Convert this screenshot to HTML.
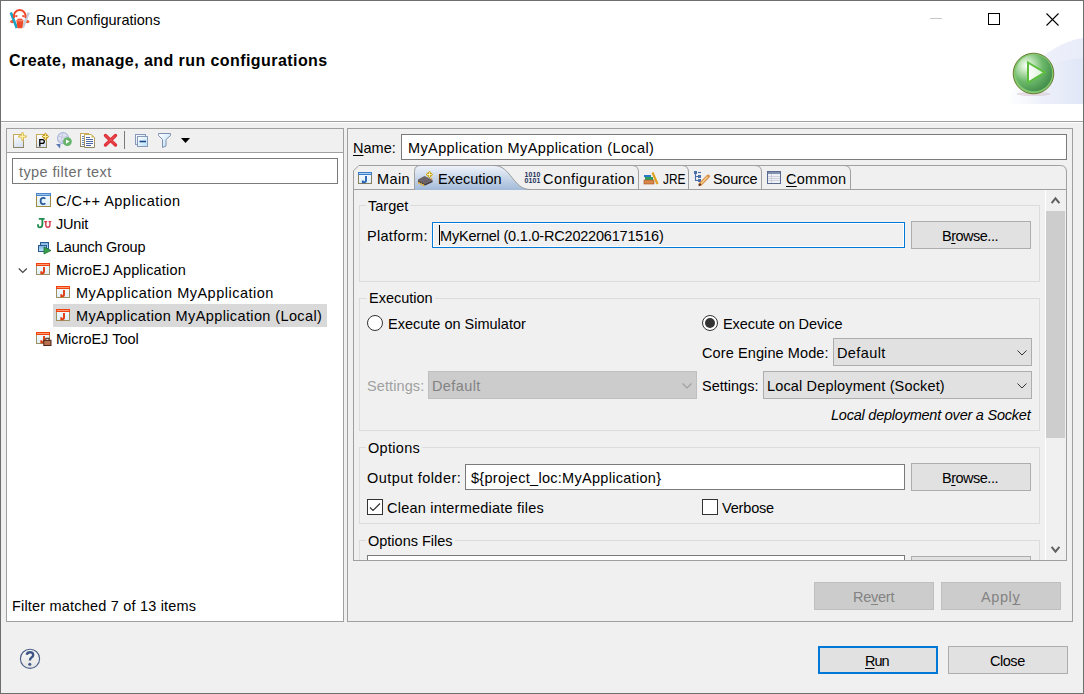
<!DOCTYPE html>
<html><head><meta charset="utf-8">
<style>
html,body{margin:0;padding:0;}
body{width:1084px;height:694px;position:relative;overflow:hidden;background:#f0f0f0;font-family:"Liberation Sans",sans-serif;font-size:14.5px;line-height:17px;color:#000;}
.a{position:absolute;}
.t{position:absolute;white-space:nowrap;font-size:14.5px;line-height:17px;}
.u{text-decoration:underline;text-underline-offset:2px;text-decoration-skip-ink:none;}
.box{position:absolute;box-sizing:border-box;}
svg{position:absolute;overflow:visible;}
</style></head><body>
<!-- window frame -->
<div class="box" style="left:0;top:0;width:1084px;height:694px;border:1px solid #6e6e6e;"></div>
<!-- white title + header -->
<div class="a" style="left:1px;top:1px;width:1082px;height:120px;background:#fff;"></div>
<div class="a" style="left:1px;top:121px;width:1082px;height:1px;background:#a0a0a0;"></div>
<div class="a" style="left:1px;top:122px;width:1082px;height:1px;background:#fff;"></div>

<!-- title -->
<div class="t" style="left:36px;top:12px;">Run Configurations</div>
<!-- window controls -->
<div class="a" style="left:930px;top:18px;width:12px;height:1px;background:#c6c6c6;"></div>
<div class="box" style="left:988px;top:13px;width:12px;height:12px;border:1px solid #000;"></div>
<svg style="left:1046px;top:13px" width="13" height="13" viewBox="0 0 13 13"><path d="M0.5 0.5L12.5 12.5M12.5 0.5L0.5 12.5" stroke="#000" stroke-width="1.1"/></svg>

<!-- header -->
<div class="t" style="left:9px;top:52px;font-weight:bold;font-size:16px;letter-spacing:0.43px;">Create, manage, and run configurations</div>


<!-- header decor + play -->
<svg style="left:1000px;top:36px" width="84" height="70" viewBox="1000 36 84 70">
<defs>
<linearGradient id="dg1" x1="0" y1="0" x2="1" y2="0"><stop offset="0" stop-color="#fff"/><stop offset="0.5" stop-color="#eef1fb"/><stop offset="1" stop-color="#e8ecf9"/></linearGradient>
<linearGradient id="dg2" x1="0" y1="0" x2="1" y2="0"><stop offset="0" stop-color="#eef1fb"/><stop offset="1" stop-color="#dfe5f6"/></linearGradient>
<radialGradient id="pg" cx="0.3" cy="0.3" r="0.8"><stop offset="0" stop-color="#ffffff"/><stop offset="0.2" stop-color="#c8e8c0"/><stop offset="0.55" stop-color="#6cb86a"/><stop offset="1" stop-color="#3e8a48"/></radialGradient>
<linearGradient id="tg" x1="0" y1="0" x2="1" y2="0"><stop offset="0" stop-color="#ffffff"/><stop offset="1" stop-color="#d6efd3"/></linearGradient>
</defs>
<path d="M1083 38 C1055 42 1025 65 1005 104 L1083 104 Z" fill="url(#dg1)"/>
<path d="M1083 58 C1060 60 1045 66 1038 72 L1040 104 L1083 104 Z" fill="url(#dg2)" opacity="0.8"/>
<ellipse cx="1033.5" cy="94" rx="17" ry="2" fill="#d8c8d0" opacity="0.6"/>
<circle cx="1033.5" cy="73.5" r="20.3" fill="#80c870" stroke="#6d7a30" stroke-width="1"/>
<circle cx="1033.9" cy="73" r="18.3" fill="url(#pg)"/>
<path d="M1028 62.5 L1044.5 72.5 L1028 82.5 Z" fill="url(#tg)" stroke="#5cbf3c" stroke-width="2" stroke-linejoin="miter"/>
</svg>

<!-- title icon -->
<svg style="left:9px;top:8px" width="22" height="22" viewBox="9 8 22 22">
<ellipse cx="12.3" cy="21.6" rx="2.3" ry="1.7" fill="#ef5a3a"/><ellipse cx="27.3" cy="21.6" rx="2.3" ry="1.7" fill="#ef5a3a"/>
<path d="M10.8 12.5 L16.8 28" stroke="#1ba4c4" stroke-width="2.6"/>
<path d="M28.8 12.5 L22.8 27.5" stroke="#c5ced8" stroke-width="2.6"/>
<path d="M14.16 18 A5.9 5.9 0 1 1 25.24 18" fill="#fff" stroke="#ef4a2a" stroke-width="1.9"/>

<circle cx="16.3" cy="16.1" r="1.2" fill="#ef5a3a"/><circle cx="23.3" cy="16.1" r="1.2" fill="#ef5a3a"/>
<path d="M16.3 20 L23.5 20 L22.3 28.3 L17.5 28.3 Z" fill="#ef4a2a"/>
<ellipse cx="19.9" cy="19.4" rx="2.9" ry="1" fill="#ef5a3a"/>
<path d="M17 20.8 H22.8" stroke="#ffb09a" stroke-width="0.8"/>
</svg>

<!-- left toolbar icons -->
<svg style="left:10px;top:130px;z-index:5" width="185" height="20" viewBox="10 130 185 20">
<defs>
<linearGradient id="docg" x1="0" y1="0" x2="0.3" y2="1"><stop offset="0" stop-color="#ffffff"/><stop offset="1" stop-color="#d8e2f2"/></linearGradient>
<linearGradient id="tanb" x1="0" y1="0" x2="0" y2="1"><stop offset="0" stop-color="#c8aa5a"/><stop offset="1" stop-color="#8c8464"/></linearGradient>
<linearGradient id="lblue" x1="0" y1="0" x2="1" y2="1"><stop offset="0" stop-color="#ffffff"/><stop offset="1" stop-color="#b6e0f8"/></linearGradient>
</defs>
<rect x="13.5" y="134.5" width="10" height="13" fill="url(#docg)" stroke="url(#tanb)"/>
<path d="M22.5 133.2 V139.8 M19.2 136.5 H25.8" stroke="#e0c060" stroke-width="2.4" stroke-linecap="round"/>
<path d="M22.5 133.8 V139.2 M19.8 136.5 H25.2" stroke="#fff4a0" stroke-width="1"/>
<rect x="36.5" y="134.5" width="10" height="13" fill="url(#docg)" stroke="url(#tanb)"/>
<path d="M39.8 146.5 V139.6 H42.3 Q44.3 139.6 44.3 141.5 Q44.3 143.4 42.3 143.4 H39.8" fill="none" stroke="#000" stroke-width="1.3"/>
<path d="M45.4 132.5 L49 136.5 L45.4 140.5 L41.8 136.5 Z" fill="#c89a20"/>
<path d="M45.4 133.8 V139.2 M43 136.5 H47.8" stroke="#fff4a0" stroke-width="1"/>
<circle cx="63" cy="138.2" r="5.5" fill="#e4e2f0" stroke="#a8b8d8" stroke-width="1.2"/><path d="M58 136 Q63 139 68 136 M58 140.5 Q63 143 68 140.5 M63 132.8 Q60 138 63 143.6" stroke="#b8c0dc" stroke-width="0.8" fill="none"/>
<path d="M56 144 L60.5 144 L60 148.5 Z" fill="#5a78b0"/>
<circle cx="67.4" cy="141.6" r="4.4" fill="#66b46a"/>
<path d="M66 139.4 L69.6 141.6 L66 143.8 Z" fill="#fff"/>
<rect x="80.5" y="133.5" width="8" height="13" fill="#fff" stroke="url(#tanb)"/>
<path d="M82 136.5 H85 M82 138.5 H85 M82 140.5 H85 M82 142.5 H85 M82 144.5 H85" stroke="#5a78b0" stroke-width="0.9"/>
<path d="M84.5 134.5 H91.5 L94.5 137.5 V147.5 H84.5 Z" fill="#fff" stroke="url(#tanb)"/>
<path d="M91.5 134.5 V137.5 H94.5" fill="#d8b860"/>
<path d="M86 137.5 H90 M86 139.5 H93 M86 141.5 H93 M86 143.5 H93 M86 145.5 H91" stroke="#4a68a8" stroke-width="1"/>
<path d="M105.5 135.5 L115.5 145 M115.5 135.5 L105.5 145" stroke="#e0303a" stroke-width="3.4" stroke-linecap="round"/>
<path d="M106 135.6 L115.2 144.4 M115.2 135.6 L106 144.4" stroke="#f07070" stroke-width="1" opacity="0.6"/>
<rect x="124" y="131" width="1" height="18" fill="#7a7a7a"/>
<rect x="135.5" y="134.5" width="10" height="10" fill="url(#lblue)" stroke="#8a98b8"/>
<rect x="137.5" y="136.5" width="10" height="10" fill="url(#lblue)" stroke="#8a98b8"/>
<path d="M139.5 141.5 H146" stroke="#1a4a8a" stroke-width="1.6"/>
<path d="M158.5 133.5 H170.5 V135.5 L166 139.5 V146 L162.5 147.5 V139.5 L158.5 135.5 Z" fill="url(#lblue)" stroke="#8090b0"/>
<path d="M181 138 H190 L185.5 143 Z" fill="#000"/>
</svg>

<!-- tree icons -->
<svg style="left:16px;top:190px;z-index:5" width="60" height="160" viewBox="16 190 60 160">
<defs>
<linearGradient id="wf" x1="0" y1="0" x2="0" y2="1"><stop offset="0" stop-color="#f4fbff"/><stop offset="1" stop-color="#dff0fa"/></linearGradient>
<linearGradient id="lb" x1="0" y1="0" x2="0" y2="1"><stop offset="0" stop-color="#7ab0e0"/><stop offset="1" stop-color="#c4e6fa"/></linearGradient>
</defs>
<!-- C/C++ -->
<rect x="36.5" y="193.5" width="14" height="13" fill="url(#wf)" stroke="#a08a40"/>
<rect x="36" y="193" width="15" height="3" fill="#4a86c8"/>
<rect x="37" y="194" width="13" height="1" fill="#9ac4ec"/>
<path d="M45.3 198.8 Q44.6 197.9 43.2 197.9 Q40.6 197.9 40.6 201 Q40.6 204.1 43.2 204.1 Q44.6 204.1 45.3 203.2" fill="none" stroke="#2a5a9a" stroke-width="1.7"/>
<!-- JUnit -->
<path d="M38.8 218.8 H44.6 M42.4 218.8 V224.5 Q42.4 227.3 39.8 227.3 Q38 227.3 38 225.2 V224.2" fill="none" stroke="#1e8a4a" stroke-width="1.8"/>
<path d="M44.2 221.6 H47.2 M48.6 221.6 H51.2 M45.8 221.6 V225 Q45.8 227.3 47.8 227.3 Q49.9 227.3 49.9 225 V221.6" fill="none" stroke="#d83a4a" stroke-width="1.4"/>
<!-- Launch group -->
<rect x="40.5" y="242.5" width="8" height="6" fill="url(#lb)" stroke="#2a5a90"/>
<rect x="38.5" y="245.5" width="8" height="6" fill="url(#lb)" stroke="#2a5a90"/>
<path d="M44 247 L51 250.5 L44 254 Z" fill="#3aa04a" stroke="#1a7030" stroke-width="0.8"/>
<!-- MicroEJ app -->
<g id="mej">
<rect x="36.5" y="263.5" width="13" height="11" fill="url(#wf)" stroke="#a09060"/>
<rect x="36" y="263" width="14" height="3" fill="#f0400e"/>
<rect x="37" y="264" width="12" height="1" fill="#ff9a70"/>
<path d="M44 267 V272 Q44 273.2 42.8 273.2 H41.3 V271.3" stroke="#e03a10" stroke-width="1.9" fill="none"/>
</g>
<use href="#mej" x="20" y="23"/>
<use href="#mej" x="20" y="46"/>
<!-- MicroEJ tool -->
<rect x="36.5" y="332.5" width="13" height="11" fill="url(#wf)" stroke="#a09060"/>
<rect x="36" y="332" width="14" height="3" fill="#f0400e"/>
<rect x="37" y="333" width="12" height="1" fill="#ff9a70"/>
<path d="M44 336 V341 Q44 342.2 42.8 342.2 H41.3 V340.3" stroke="#e03a10" stroke-width="1.9" fill="none"/>
<rect x="43.8" y="340.3" width="7.2" height="5.2" fill="#b8704e" stroke="#4a2418" stroke-width="1"/>
<rect x="45.8" y="338.3" width="3.2" height="2" fill="#fff" stroke="#4a2418" stroke-width="1"/>
</svg>

<!-- LEFT PANEL -->
<div class="box" style="left:6px;top:128px;width:338px;height:494px;border:1px solid #a0a0a0;background:#fff;"></div>
<div class="a" style="left:7px;top:129px;width:336px;height:23px;background:#f0f0f0;"></div>
<div class="a" style="left:7px;top:152px;width:336px;height:1px;background:#a0a0a0;"></div>
<div class="box" style="left:12px;top:158px;width:326px;height:26px;border:1px solid #7a7a7a;background:#fff;"></div>
<div class="t" style="left:19px;top:164px;color:#6d6d6d;letter-spacing:0.4px;">type filter text</div>

<!-- tree -->
<div class="a" style="left:53px;top:304px;width:274px;height:23px;background:#d9d9d9;"></div>
<div class="t" style="left:56px;top:193px;letter-spacing:0.5px;">C/C++ Application</div>
<div class="t" style="left:56px;top:216px;letter-spacing:-0.18px;">JUnit</div>
<div class="t" style="left:56px;top:239px;letter-spacing:-0.22px;">Launch Group</div>
<div class="t" style="left:56px;top:262px;letter-spacing:0.18px;">MicroEJ Application</div>
<div class="t" style="left:76px;top:285px;letter-spacing:0.49px;">MyApplication MyApplication</div>
<div class="t" style="left:76px;top:308px;letter-spacing:0.38px;">MyApplication MyApplication (Local)</div>
<div class="t" style="left:56px;top:331px;">MicroEJ Tool</div>
<svg style="left:18px;top:268px" width="10" height="6" viewBox="0 0 10 6"><path d="M0.8 0.5L4.8 4.5L8.8 0.5" stroke="#404040" stroke-width="1.1" fill="none"/></svg>

<div class="t" style="left:12px;top:598px;letter-spacing:0.19px;">Filter matched 7 of 13 items</div>

<!-- RIGHT PANEL -->
<div class="box" style="left:347px;top:128px;width:726px;height:494px;border:1px solid #a0a0a0;"></div>
<div class="t" style="left:353px;top:140px;"><span class="u">N</span>ame:</div>
<div class="box" style="left:401px;top:134px;width:666px;height:26px;border:1px solid #7a7a7a;background:#fff;"></div>
<div class="t" style="left:408px;top:140px;letter-spacing:0.38px;">MyApplication MyApplication (Local)</div>

<!-- tab folder -->
<div class="box" style="left:353px;top:171px;width:714px;height:390px;border:1px solid #a0a0a0;border-top:none;"></div>
<svg style="left:353px;top:164px" width="714" height="27" viewBox="353 164 714 27">
<defs><linearGradient id="selg" x1="0" y1="0" x2="0" y2="1"><stop offset="0" stop-color="#eef2f9"/><stop offset="1" stop-color="#a2bad8"/></linearGradient></defs>
<path d="M415 190 V171.5 Q415 166 420.5 166 H495 C511 166 513 189.5 530 189.5 V190 Z" fill="url(#selg)"/>
<path d="M353.5 172 V170.8 L358.8 165.5 H1060.5 Q1066.5 165.5 1066.5 172" fill="none" stroke="#a0a0a0"/>
<path d="M353.5 189.5 H415 M529 189.5 H1066.5" stroke="#a0a0a0"/>
<path d="M414.5 190 V171.5 Q414.5 165.5 420.5 165.5" fill="none" stroke="#a0a0a0"/>
<path d="M494 165.5 C511 165.5 513 189.5 530 189.5" fill="none" stroke="#9a9a9a"/>
<path d="M632 165.5 Q638.5 165.5 638.5 172 V189.5" fill="none" stroke="#a0a0a0"/>
<path d="M682 165.5 Q688.5 165.5 688.5 172 V189.5" fill="none" stroke="#a0a0a0"/>
<path d="M755 165.5 Q761.5 165.5 761.5 172 V189.5" fill="none" stroke="#a0a0a0"/>
<path d="M844 165.5 Q850.5 165.5 850.5 172 V189.5" fill="none" stroke="#a0a0a0"/>
<!-- tab icons -->
<defs>
<linearGradient id="wf2" x1="0" y1="0" x2="0" y2="1"><stop offset="0" stop-color="#f4fbff"/><stop offset="1" stop-color="#dff0fa"/></linearGradient>
</defs>
<rect x="358.5" y="172.5" width="13" height="11" fill="url(#wf2)" stroke="#8a7e60"/>
<rect x="358" y="172" width="14" height="3" fill="#3a7cc8"/>
<rect x="359" y="173" width="12" height="1" fill="#a8d0f0"/>
<path d="M366 176 V180.8 Q366 182.2 364.6 182.2 H362.8 V180.6" stroke="#2a64b0" stroke-width="1.9" fill="none"/>
<!-- chip -->
<path d="M418 179.5 L424.5 176 L432.5 179.8 L432.5 181.5 L425 184.8 L418 181.5 Z" fill="#6c6468"/>
<path d="M418 181.5 L425 184.8 L432.5 181.5" fill="none" stroke="#3a3436" stroke-width="1.2"/>
<path d="M419.3 182 L418.6 184 M421.5 183 L420.8 185 M423.7 184 L423 186" stroke="#f0b020" stroke-width="1.3"/>
<path d="M429.4 171 L433 174.6 L429.4 178.2 L425.8 174.6 Z" fill="#c8a010"/>
<path d="M429.4 172.2 V177 M427 174.6 H431.8" stroke="#fff6c0" stroke-width="1"/>
<circle cx="431.5" cy="178.6" r="0.8" fill="#f0b020"/>
<!-- 1010 0101 -->
<text x="524.6" y="176.9" font-family="Liberation Sans" font-weight="bold" font-size="7" fill="#1a2f5a" letter-spacing="0.1">1010</text>
<text x="524.6" y="183.1" font-family="Liberation Sans" font-weight="bold" font-size="7" fill="#1a2f5a" letter-spacing="0.1">0101</text>
<!-- books -->
<rect x="644" y="175" width="7" height="2.2" fill="#2a78c0"/>
<rect x="645" y="177" width="8" height="3.2" fill="#2aa060"/>
<rect x="644" y="180" width="10" height="4" fill="#d8864a" stroke="#a85020" stroke-width="0.6"/>
<path d="M652.5 172.5 L657.5 184" stroke="#e0a020" stroke-width="2.2"/>
<!-- source -->
<rect x="694" y="171" width="3" height="3" fill="#4a6ea8"/>
<path d="M698 172.5 H701" stroke="#4a6ea8" stroke-width="1.1"/>
<path d="M695.5 174 V180.5 H698 M695.5 176.5 H698" stroke="#4a6ea8" stroke-width="1.1" fill="none"/>
<rect x="698" y="175" width="3" height="3" fill="#4a6ea8"/>
<rect x="698" y="179" width="3" height="3" fill="#4a6ea8"/>
<path d="M700.3 184.2 L708.2 176.3" stroke="#d8904a" stroke-width="3.6" stroke-linecap="round"/>
<path d="M701 183.4 L707.6 176.8" stroke="#f8d090" stroke-width="1.4"/>
<path d="M698.8 185.6 L700.6 183.8" stroke="#5a3020" stroke-width="1.8"/>
<!-- common table -->
<rect x="767.5" y="171.5" width="13" height="12" fill="#eef0f6" stroke="#5a6a90"/>
<rect x="768" y="172" width="12" height="2" fill="#8090b0"/>
<path d="M771.5 174 V183 M768 176.5 H780 M768 178.5 H780 M768 180.5 H780" stroke="#c4cad8" stroke-width="0.8"/>
</svg>

<!-- tabs texts -->
<div class="t" style="left:377px;top:171px;letter-spacing:0.4px;">Main</div>
<div class="t" style="left:438px;top:171px;">Execution</div>
<div class="t" style="left:543px;top:171px;letter-spacing:0.45px;">Configuration</div>
<div class="t" style="left:663px;top:171px;transform:scaleX(0.82);transform-origin:0 0;">JRE</div>
<div class="t" style="left:713px;top:171px;letter-spacing:-0.3px;">Source</div>
<div class="t" style="left:786px;top:171px;letter-spacing:0.25px;"><span class="u">C</span>ommon</div>

<!-- scrollbar -->
<div class="a" style="left:1045px;top:190px;width:1px;height:370px;background:#fff;"></div>
<div class="a" style="left:1046px;top:211px;width:19px;height:227px;background:#cdcdcd;"></div>
<svg style="left:1051px;top:197px" width="10" height="8" viewBox="0 0 10 8"><path d="M0.6 6.2L4.5 1.3L8.4 6.2" stroke="#606060" stroke-width="2" fill="none"/></svg>
<svg style="left:1051px;top:546px" width="10" height="8" viewBox="0 0 10 8"><path d="M0.6 0.8L4.5 5.7L8.4 0.8" stroke="#606060" stroke-width="2" fill="none"/></svg>

<!-- Target group -->
<div class="box" style="left:359px;top:205px;width:681px;height:77px;border:1px solid #dcdcdc;"></div>
<div class="a t" style="left:366px;top:198px;padding:0 2px;background:#f0f0f0;">Target</div>
<div class="t" style="left:367px;top:228px;letter-spacing:0.3px;">Platform:</div>
<div class="box" style="left:432px;top:222px;width:473px;height:26px;border:1px solid #0078d7;background:#f0f0f0;box-shadow:inset 0 0 0 1px #fff;"></div>
<div class="a" style="left:439px;top:225px;width:1px;height:20px;background:#000;"></div>
<div class="t" style="left:440px;top:228px;letter-spacing:-0.2px;">MyKernel (0.1.0-RC202206171516)</div>
<div class="box" style="left:911px;top:221px;width:120px;height:28px;border:1px solid #adadad;background:#e1e1e1;"></div>
<div class="t" style="left:942px;top:228px;letter-spacing:-0.5px;">B<span class="u">r</span>owse...</div>

<!-- Execution group -->
<div class="box" style="left:359px;top:298px;width:681px;height:133px;border:1px solid #dcdcdc;"></div>
<div class="t" style="left:367px;top:290px;padding:0 2px;background:#f0f0f0;">Execution</div>
<div class="box" style="left:367px;top:315px;width:16px;height:16px;border:1px solid #333;border-radius:50%;background:#fff;"></div>
<div class="t" style="left:388px;top:316px;">Execute on Simulator</div>
<div class="box" style="left:702px;top:315px;width:16px;height:16px;border:1px solid #333;border-radius:50%;background:#fff;"></div>
<div class="a" style="left:705px;top:318px;width:10px;height:10px;border-radius:50%;background:#333;"></div>
<div class="t" style="left:723px;top:316px;letter-spacing:-0.09px;">Execute on Device</div>
<div class="t" style="left:702px;top:345px;letter-spacing:0.1px;">Core Engine Mode:</div>
<div class="box" style="left:833px;top:338px;width:199px;height:28px;border:1px solid #adadad;background:#e1e1e1;"></div>
<div class="t" style="left:837px;top:345px;letter-spacing:0.4px;">Default</div>
<svg style="left:1017px;top:350px" width="10" height="6" viewBox="0 0 10 6"><path d="M0.5 0.5L5 5L9.5 0.5" stroke="#333" stroke-width="1" fill="none"/></svg>

<div class="t" style="left:367px;top:378px;color:#a0a0a0;letter-spacing:0.1px;">Settings:</div>
<div class="box" style="left:428px;top:371px;width:269px;height:28px;border:1px solid #bfbfbf;background:#cccccc;"></div>
<div class="t" style="left:432px;top:378px;color:#838383;letter-spacing:0.4px;">Default</div>
<svg style="left:682px;top:383px" width="10" height="6" viewBox="0 0 10 6"><path d="M0.5 0.5L5 5L9.5 0.5" stroke="#a0a0a0" stroke-width="1.2" fill="none"/></svg>

<div class="t" style="left:702px;top:378px;letter-spacing:0px;">Settings:</div>
<div class="box" style="left:763px;top:371px;width:269px;height:28px;border:1px solid #adadad;background:#e1e1e1;"></div>
<div class="t" style="left:767px;top:378px;letter-spacing:0.15px;">Local Deployment (Socket)</div>
<svg style="left:1017px;top:383px" width="10" height="6" viewBox="0 0 10 6"><path d="M0.5 0.5L5 5L9.5 0.5" stroke="#333" stroke-width="1" fill="none"/></svg>
<div class="t" style="left:831px;top:407px;font-style:italic;letter-spacing:-0.23px;">Local deployment over a Socket</div>

<!-- Options group -->
<div class="box" style="left:359px;top:447px;width:681px;height:77px;border:1px solid #dcdcdc;"></div>
<div class="t" style="left:366px;top:440px;padding:0 2px;background:#f0f0f0;letter-spacing:0.3px;">Options</div>
<div class="t" style="left:367px;top:470px;letter-spacing:0.45px;">Output folder:</div>
<div class="box" style="left:465px;top:464px;width:440px;height:26px;border:1px solid #7a7a7a;background:#fff;"></div>
<div class="t" style="left:471px;top:470px;letter-spacing:0.29px;">${project_loc:MyApplication}</div>
<div class="box" style="left:911px;top:463px;width:120px;height:28px;border:1px solid #adadad;background:#e1e1e1;"></div>
<div class="t" style="left:942px;top:470px;letter-spacing:-0.5px;">B<span class="u">r</span>owse...</div>
<div class="box" style="left:367px;top:499px;width:16px;height:16px;border:1px solid #333;background:#fff;"></div>
<svg style="left:369px;top:503px" width="12" height="9" viewBox="0 0 12 9"><path d="M1 4.5L4 7.5L11 0.5" stroke="#333" stroke-width="1.2" fill="none"/></svg>
<div class="t" style="left:387px;top:500px;letter-spacing:0.23px;">Clean intermediate files</div>
<div class="box" style="left:702px;top:499px;width:16px;height:16px;border:1px solid #333;background:#fff;"></div>
<div class="t" style="left:722px;top:500px;letter-spacing:-0.17px;">Verbose</div>

<!-- Options Files group -->
<div class="box" style="left:359px;top:540px;width:681px;height:40px;border:1px solid #dcdcdc;"></div>
<div class="t" style="left:366px;top:533px;padding:0 2px;background:#f0f0f0;">Options Files</div>
<div class="box" style="left:367px;top:555px;width:538px;height:26px;border:1px solid #7a7a7a;background:#fff;"></div>
<div class="box" style="left:911px;top:556px;width:120px;height:28px;border:1px solid #adadad;background:#e1e1e1;"></div>
<!-- clip below content -->
<div class="a" style="left:348px;top:561px;width:724px;height:60px;background:#f0f0f0;"></div>
<div class="a" style="left:353px;top:560px;width:714px;height:1px;background:#a0a0a0;"></div>

<!-- Revert / Apply -->
<div class="box" style="left:814px;top:582px;width:120px;height:28px;border:1px solid #bfbfbf;background:#cccccc;"></div>
<div class="t" style="left:853px;top:589px;color:#838383;letter-spacing:-0.26px;">Re<span class="u">v</span>ert</div>
<div class="box" style="left:941px;top:582px;width:120px;height:28px;border:1px solid #bfbfbf;background:#cccccc;"></div>
<div class="t" style="left:981px;top:589px;color:#838383;letter-spacing:0.6px;">Appl<span class="u">y</span></div>

<!-- help -->
<svg style="left:19px;top:648px" width="22" height="22" viewBox="19 648 22 22">
<defs><linearGradient id="hg" x1="0" y1="0" x2="0" y2="1"><stop offset="0" stop-color="#fafafa"/><stop offset="1" stop-color="#e4e4e4"/></linearGradient></defs>
<circle cx="30" cy="658.8" r="9.6" fill="url(#hg)" stroke="#4a5f88" stroke-width="1.1"/>
<path d="M26.7 654.8 Q27.2 652.3 30 652.3 Q33.2 652.3 33.2 654.9 Q33.2 656.5 31.5 657.5 Q29.9 658.4 29.9 660.6" fill="none" stroke="#3e5586" stroke-width="2.4"/>
<circle cx="29.8" cy="664.2" r="1.5" fill="#3e5586"/>
</svg>
<!-- bottom buttons -->
<div class="box" style="left:818px;top:646px;width:120px;height:28px;border:2px solid #0078d7;background:#e1e1e1;"></div>
<div class="t" style="left:865px;top:653px;letter-spacing:-1px;"><span class="u">R</span>un</div>
<div class="box" style="left:948px;top:646px;width:120px;height:28px;border:1px solid #adadad;background:#e1e1e1;"></div>
<div class="t" style="left:990px;top:653px;letter-spacing:-0.47px;">Close</div>

</body></html>
